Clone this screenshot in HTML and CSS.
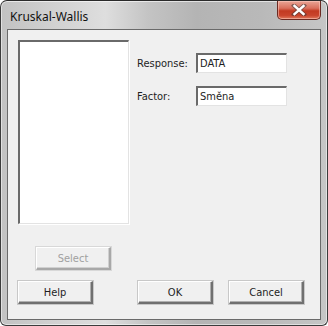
FILE: index.html
```html
<!DOCTYPE html>
<html>
<head>
<meta charset="utf-8">
<link rel="stylesheet" href="styles.css">
</head>
<body>
<div class="window">
  <div class="titlebar">
    <span class="title">Kruskal-Wallis</span>
    <div class="close">
      <svg width="16" height="12" viewBox="0 0 16 12">
        <path d="M3 1.5 L13 10.5 M13 1.5 L3 10.5" stroke="#3a3a3a" stroke-width="4.2" stroke-linecap="square" fill="none" opacity="0.55"/>
        <path d="M3.5 2 L12.5 10 M12.5 2 L3.5 10" stroke="#ffffff" stroke-width="2.4" stroke-linecap="square" fill="none"/>
      </svg>
    </div>
  </div>
  <div class="client">
    <div class="toprow">
      <div class="listbox"></div>
      <div class="fields">
        <div class="field">
          <span class="label">Response:</span>
          <div class="input">DATA</div>
        </div>
        <div class="field">
          <span class="label">Factor:</span>
          <div class="input">Směna</div>
        </div>
      </div>
    </div>
    <div class="selectrow">
      <div class="btn disabled">Select</div>
    </div>
    <div class="btnrow">
      <div class="btn">Help</div>
      <div class="btn ok">OK</div>
      <div class="btn cancel">Cancel</div>
    </div>
  </div>
</div>
</body>
</html>
```
FILE: styles.css
```css
html, body {
  margin: 0;
  padding: 0;
  background: #ffffff;
}
.window {
  position: relative;
  width: 328px;
  height: 326px;
  box-sizing: border-box;
  border: 1px solid #3c3c3c;
  border-top-color: #2a2a2a;
  border-radius: 7px 7px 6px 6px;
  padding: 0 6px 5px 6px;
  background: linear-gradient(90deg, #c2c2c2 0%, #d0d0d0 15%, #dedede 32%, #c4c4c4 45%, #b4b4b4 60%, #b9b9b9 80%, #c6c6c6 100%);
  box-shadow: inset 0 1px 0 rgba(255,255,255,0.6), inset 1px 0 0 rgba(255,255,255,0.5), inset -1px 0 0 rgba(255,255,255,0.5), inset 0 -1px 0 rgba(255,255,255,0.5);
  font-family: "DejaVu Sans Condensed", "DejaVu Sans", sans-serif;
  font-size: 11px;
  color: #1e1e1e;
}
.titlebar {
  height: 28px;
  display: flex;
  align-items: center;
}
.title {
  font-family: "Noto Sans", "Open Sans", sans-serif;
  font-size: 12px;
  margin-left: 3px;
  margin-top: 2px;
  color: #111;
}
.close {
  position: absolute;
  top: 0;
  right: 6px;
  width: 44px;
  height: 19px;
  box-sizing: border-box;
  border: 1px solid #6b2a22;
  border-top: none;
  border-radius: 0 0 5px 5px;
  background: linear-gradient(180deg, #e9a596 0%, #d9705d 40%, #c23a22 55%, #c9442c 80%, #e07a5e 100%);
  display: flex;
  align-items: center;
  justify-content: center;
  box-shadow: inset 0 0 0 1px rgba(255,210,200,0.5);
}
.client {
  height: 291px;
  box-sizing: border-box;
  border: 1px solid #6a6a6a;
  background: #f0f0f0;
  padding: 10px 0 0 10px;
  display: flex;
  flex-direction: column;
}
.toprow {
  display: flex;
}
.listbox {
  width: 111px;
  height: 184px;
  box-sizing: border-box;
  background: #fff;
  border-top: 2px solid #6a6a6a;
  border-left: 2px solid #6a6a6a;
  border-right: 1px solid #e3e3e3;
  border-bottom: 1px solid #e3e3e3;
  box-shadow: 1px 1px 0 #ffffff;
}
.fields {
  margin-left: 8px;
  padding-top: 13px;
  display: flex;
  flex-direction: column;
  gap: 13px;
}
.field {
  display: flex;
  align-items: center;
}
.label {
  width: 59px;
}
.input {
  width: 91px;
  height: 20px;
  box-sizing: border-box;
  background: #fff;
  border-top: 2px solid #6a6a6a;
  border-left: 2px solid #6a6a6a;
  border-right: 1px solid #e3e3e3;
  border-bottom: 1px solid #e3e3e3;
  padding-left: 2px;
  line-height: 17px;
}
.selectrow {
  margin-top: 23px;
  padding-left: 18px;
  display: flex;
}
.btnrow {
  margin-top: 11px;
  display: flex;
}
.btn {
  width: 75px;
  height: 23px;
  box-sizing: border-box;
  background: #f0f0f0;
  border-top: 1px solid #ffffff;
  border-left: 1px solid #ffffff;
  border-right: 2px solid #707070;
  border-bottom: 2px solid #707070;
  box-shadow: inset -1px -1px 0 #b0b0b0, 0 0 0 1px #c8c8c8;
  display: flex;
  align-items: center;
  justify-content: center;
}
.btn.disabled {
  color: #a0a0a0;
  border-right-color: #a8a8a8;
  border-bottom-color: #a8a8a8;
  box-shadow: inset -1px -1px 0 #d0d0d0, 0 0 0 1px #d8d8d8;
}
.btn.ok {
  margin-left: 45px;
}
.btn.cancel {
  margin-left: 16px;
}
```
